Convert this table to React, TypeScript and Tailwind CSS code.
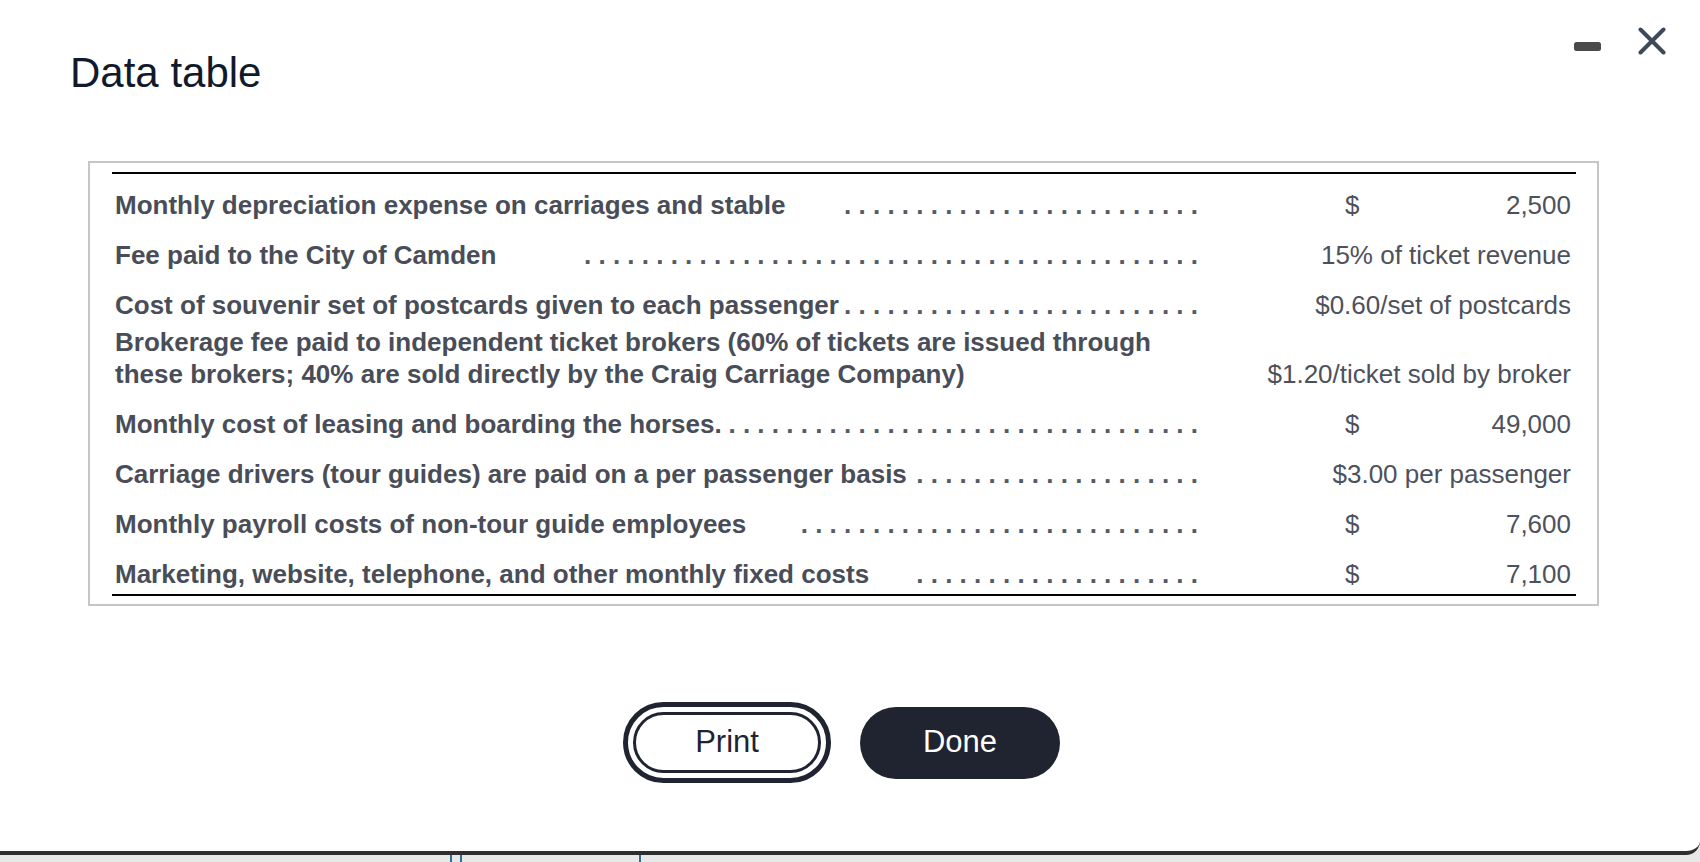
import React from "react";

type Row = {
  label: React.ReactNode;
  dots?: string; // class for the leader column
  value?: string;
  amount?: string;
  mt: string;
};

const rows: Row[] = [
  { label: "Monthly depreciation expense on carriages and stable", dots: "w-[356px]", amount: "2,500", mt: "mt-[15px]" },
  { label: "Fee paid to the City of Camden", dots: "w-[618px]", value: "15% of ticket revenue", mt: "mt-[17.5px]" },
  { label: "Cost of souvenir set of postcards given to each passenger", dots: "flex-1", value: "$0.60/set of postcards", mt: "mt-[17.5px]" },
  {
    label: (
      <>
        Brokerage fee paid to independent ticket brokers (60% of tickets are issued through
        <br />
        these brokers; 40% are sold directly by the Craig Carriage Company)
      </>
    ),
    value: "$1.20/ticket sold by broker",
    mt: "mt-[4px]",
  },
  { label: "Monthly cost of leasing and boarding the horses.", dots: "flex-1", amount: "49,000", mt: "mt-[17.5px]" },
  { label: "Carriage drivers (tour guides) are paid on a per passenger basis", dots: "w-[286px]", value: "$3.00 per passenger", mt: "mt-[17.5px]" },
  { label: "Monthly payroll costs of non-tour guide employees", dots: "w-[401px]", amount: "7,600", mt: "mt-[17.5px]" },
  { label: "Marketing, website, telephone, and other monthly fixed costs", dots: "w-[286px]", amount: "7,100", mt: "mt-[17.5px]" },
];

const DOTS = "." + " .".repeat(50);

function DataRow({ row }: { row: Row }) {
  const fixed = row.dots && row.dots !== "flex-1";
  return (
    <div className={`flex items-end ${row.mt}`}>
      <div className="w-[1083px] flex items-end">
        <span className={`font-bold text-[#494d58] ${fixed ? "flex-1" : "shrink-0"}`}>{row.label}</span>
        {row.dots && (
          <span className={`${row.dots} flex justify-end overflow-hidden whitespace-pre`}>
            <span className="shrink-0 font-bold text-[#555a65]">{DOTS}</span>
          </span>
        )}
      </div>
      <div className="flex-1 flex text-[#4d515c]">
        {row.amount ? (
          <>
            <span className="ml-[147px]">$</span>
            <span className="flex-1 text-right">{row.amount}</span>
          </>
        ) : (
          <span className="flex-1 text-right">{row.value}</span>
        )}
      </div>
    </div>
  );
}

export default function App() {
  return (
    <div className="w-[1700px] h-[862px] bg-[#e8e8e8] overflow-hidden font-['Liberation_Sans',Arial,sans-serif]">
      <div className="h-[855px] bg-white border-b-4 border-[#2e2e2e] rounded-br-[14px] flex flex-col">
        {/* header */}
        <div className="flex items-start justify-between pl-[70px] pr-[34px] pt-[27px]">
          <h1 className="mt-[25px] text-[42px] leading-none text-[#111a2b]">Data table</h1>
          <div className="flex items-start gap-[37px]">
            <svg width="27" height="9" viewBox="0 0 27 9" className="mt-[15px]">
              <rect x="0" y="0" width="27" height="9" rx="2.5" fill="#4a4a4a" />
            </svg>
            <svg width="28" height="28" viewBox="0 0 28 28">
              <path d="M2.5 2.5 L25.5 25.5 M25.5 2.5 L2.5 25.5" stroke="#3e4a5a" strokeWidth="4" strokeLinecap="round" />
            </svg>
          </div>
        </div>

        {/* table */}
        <div className="mt-[67px] ml-[88px] w-[1511px] border-2 border-[#c6c6c6] pl-[22px] pr-[21px] pt-[9px] pb-[8px]">
          <div className="border-t-2 border-b-2 border-black pl-[3px] pr-[5px] pb-[3px] text-[26px] leading-[32.5px]">
            {rows.map((r, i) => (
              <DataRow key={i} row={r} />
            ))}
          </div>
        </div>

        {/* buttons */}
        <div className="mt-[101px] ml-[633px] flex items-center gap-[39px]">
          <button className="w-[188px] h-[61px] rounded-full border-[3px] border-[#1f2430] outline-[5px] outline-solid outline-[#1f2430] outline-offset-[5px] bg-white text-[31px] text-[#1f2430]">
            Print
          </button>
          <button className="w-[200px] h-[72px] rounded-full bg-[#1f2430] text-[31px] text-white">
            Done
          </button>
        </div>
      </div>

      {/* strip below */}
      <div className="h-[7px] flex">
        <div className="ml-[450px] w-[2px] bg-[#2f6f8f]" />
        <div className="ml-[8px] w-[2px] bg-[#2f6f8f]" />
        <div className="ml-[177px] w-[2px] bg-[#2f6f8f]" />
      </div>
    </div>
  );
}
